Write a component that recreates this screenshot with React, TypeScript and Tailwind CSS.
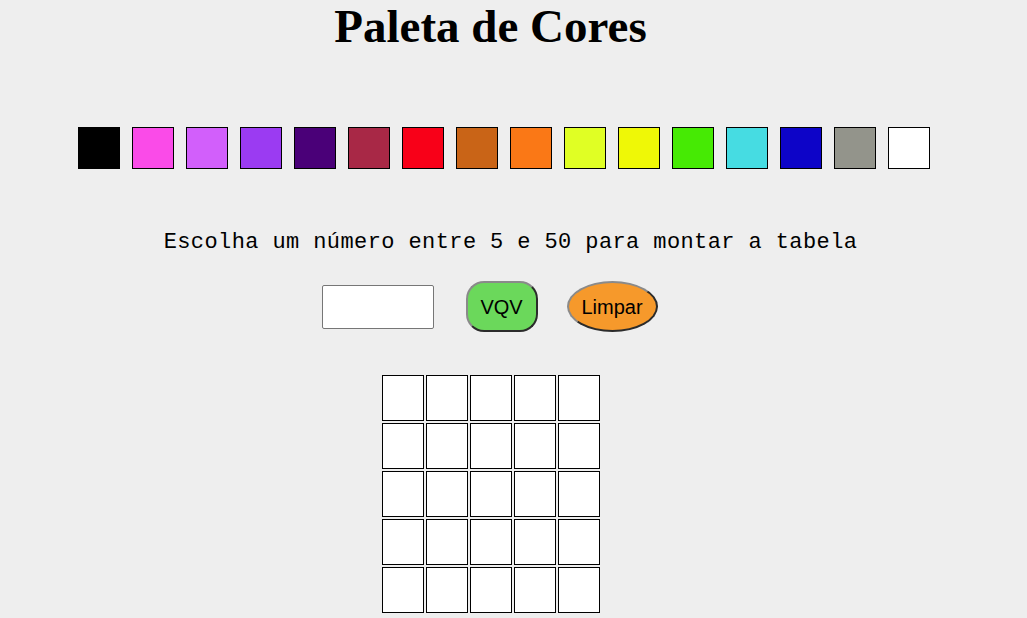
const colors = [
  "bg-[#000000]",
  "bg-[#fa4be8]",
  "bg-[#d25ffb]",
  "bg-[#9b3bf2]",
  "bg-[#4a0078]",
  "bg-[#a82846]",
  "bg-[#f80018]",
  "bg-[#c96417]",
  "bg-[#fa7816]",
  "bg-[#e0ff24]",
  "bg-[#eff806]",
  "bg-[#46ea04]",
  "bg-[#46dce2]",
  "bg-[#0d04c8]",
  "bg-[#93948b]",
  "bg-[#ffffff]",
];

const App = () => {
  const rows = [0, 1, 2, 3, 4];
  const cols = [0, 1, 2, 3, 4];

  return (
    <div className="min-h-screen w-full bg-[#eeeeee] flex flex-col overflow-hidden">
      <div className="flex justify-center">
        <h1 className="mr-[46px] font-['Liberation_Serif',serif] font-bold text-[47px] leading-[52px] text-black">
          Paleta de Cores
        </h1>
      </div>

      <div className="flex justify-center mt-[75px]">
        <div className="flex gap-[12px] mr-[19px]">
          {colors.map((c) => (
            <div key={c} className={`w-[42px] h-[42px] border border-black ${c}`} />
          ))}
        </div>
      </div>

      <div className="flex justify-center mt-[62px]">
        <p className="mr-[6px] font-['Liberation_Mono',monospace] text-[22px] leading-[24px] tracking-[0.4px] text-black">
          Escolha um número entre 5 e 50 para montar a tabela
        </p>
      </div>

      <div className="flex justify-center items-center mt-[26px]">
        <div className="flex items-center mr-[48px]">
          <input
            type="text"
            className="w-[112px] h-[44px] bg-white border border-[#767676] rounded-[2px] outline-none"
          />
          <button className="ml-[32px] w-[72px] h-[51px] rounded-[18px] bg-[#6bd85b] border-2 border-t-[#8a8a8a] border-l-[#8a8a8a] border-r-[#2b2b2b] border-b-[#2b2b2b] font-['Liberation_Sans',sans-serif] text-[20px] text-black">
            VQV
          </button>
          <button className="ml-[29px] w-[91px] h-[51px] rounded-[50%] bg-[#f6992b] border-2 border-t-[#8a8a8a] border-l-[#8a8a8a] border-r-[#2b2b2b] border-b-[#2b2b2b] font-['Liberation_Sans',sans-serif] text-[20px] text-black">
            Limpar
          </button>
        </div>
      </div>

      <div className="flex justify-center mt-[43px]">
        <div className="mr-[45px] flex flex-col gap-[2px]">
          {rows.map((r) => (
            <div key={r} className="flex gap-[2px]">
              {cols.map((c) => (
                <div key={c} className="w-[42px] h-[46px] bg-white border border-black" />
              ))}
            </div>
          ))}
        </div>
      </div>
    </div>
  );
};

export default App;
